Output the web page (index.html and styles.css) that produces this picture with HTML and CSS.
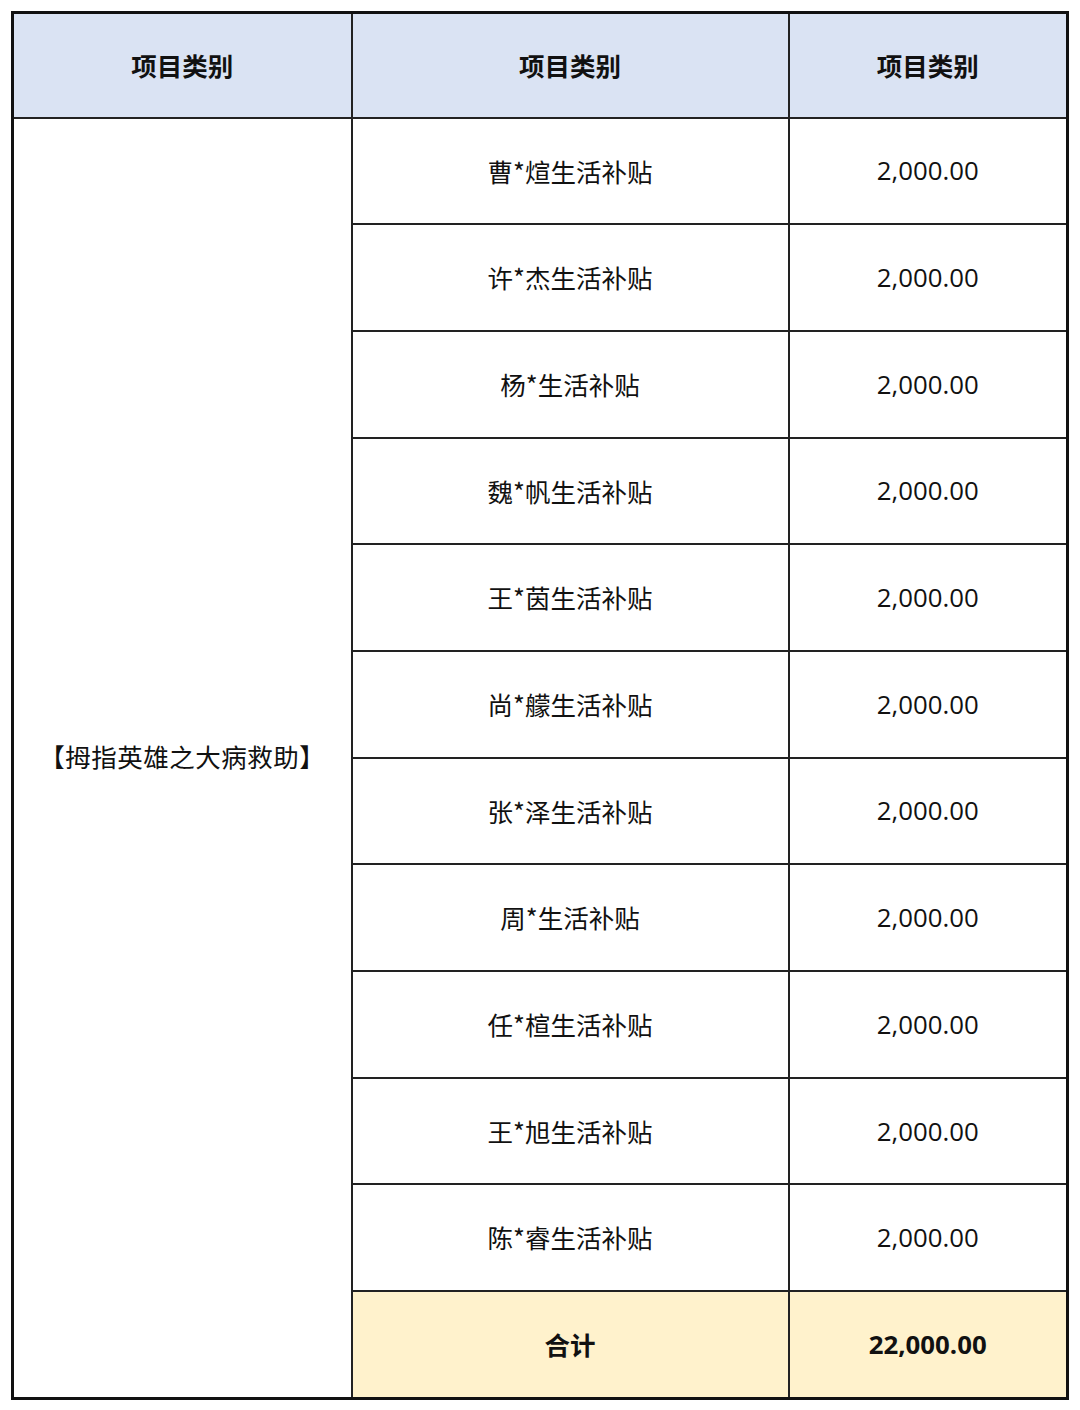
FILE: index.html
```html
<!DOCTYPE html>
<html lang="zh">
<head>
<meta charset="utf-8">
<link rel="stylesheet" href="styles.css">
</head>
<body>
<table class="sheet">
  <colgroup>
    <col class="c1"><col class="c2"><col class="c3">
  </colgroup>
  <tr class="head">
    <th>项目类别</th><th>项目类别</th><th>项目类别</th>
  </tr>
  <tr><td class="cat" rowspan="12">【拇指英雄之大病救助】</td><td>曹*煊生活补贴</td><td class="num">2,000.00</td></tr>
  <tr><td>许*杰生活补贴</td><td class="num">2,000.00</td></tr>
  <tr><td>杨*生活补贴</td><td class="num">2,000.00</td></tr>
  <tr><td>魏*帆生活补贴</td><td class="num">2,000.00</td></tr>
  <tr><td>王*茵生活补贴</td><td class="num">2,000.00</td></tr>
  <tr><td>尚*艨生活补贴</td><td class="num">2,000.00</td></tr>
  <tr><td>张*泽生活补贴</td><td class="num">2,000.00</td></tr>
  <tr><td>周*生活补贴</td><td class="num">2,000.00</td></tr>
  <tr><td>任*楦生活补贴</td><td class="num">2,000.00</td></tr>
  <tr><td>王*旭生活补贴</td><td class="num">2,000.00</td></tr>
  <tr><td>陈*睿生活补贴</td><td class="num">2,000.00</td></tr>
  <tr class="total"><td>合计</td><td class="num">22,000.00</td></tr>
</table>
</body>
</html>
```
FILE: styles.css
```css
html, body {
  margin: 0;
  padding: 0;
  background: #ffffff;
}
body {
  padding: 11px;
  font-family: "Noto Sans CJK SC", "Noto Sans", sans-serif;
  color: #111;
}
.sheet {
  border-collapse: collapse;
  width: 1055px;
  table-layout: fixed;
  border: 3px solid #111;
}
.c1 { width: 339px; }
.c2 { width: 437px; }
.c3 { width: 279px; }
.sheet th,
.sheet td {
  border: 2px solid #222;
  text-align: center;
  vertical-align: middle;
  padding: 0;
  font-size: 25.5px;
  font-weight: 400;
  height: 104.7px;
  line-height: 1.2;
}
.sheet tr.head th {
  height: 102.5px;
  background: #dae3f3;
  font-weight: 700;
}
.sheet td.cat {
  font-size: 25.5px;
  letter-spacing: 0.5px;
  padding-bottom: 2px;
}
.sheet td.num {
  font-family: "Open Sans", "Noto Sans", sans-serif;
  font-size: 25.8px;
}
.sheet tr.total td {
  background: #fff2cc;
  font-weight: 700;
}
```
